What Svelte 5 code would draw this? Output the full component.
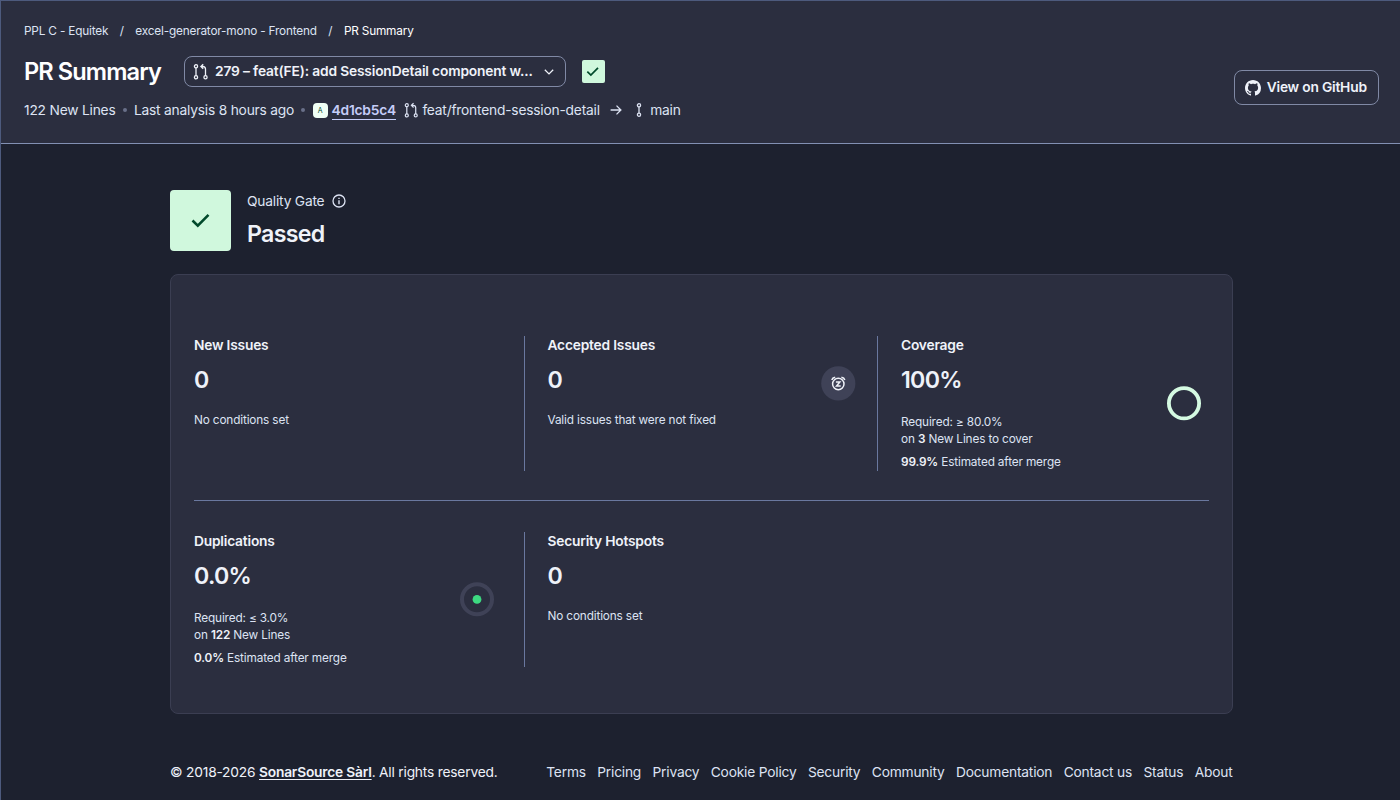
<script>
  const links = ['Terms', 'Pricing', 'Privacy', 'Cookie Policy', 'Security', 'Community', 'Documentation', 'Contact us', 'Status', 'About'];

  const rows = [
    [
      { title: 'New Issues', value: '0', note: 'No conditions set' },
      { title: 'Accepted Issues', value: '0', note: 'Valid issues that were not fixed', icon: 'snooze' },
      { title: 'Coverage', value: '100%', required: '≥ 80.0%', lines: '3', linesLabel: 'New Lines to cover', estimated: '99.9%', icon: 'coverage' }
    ],
    [
      { title: 'Duplications', value: '0.0%', required: '≤ 3.0%', lines: '122', linesLabel: 'New Lines', estimated: '0.0%', icon: 'duplication' },
      { title: 'Security Hotspots', value: '0', note: 'No conditions set' }
    ]
  ];
</script>

{#snippet pull(size)}
  <svg viewBox="0 0 16 16" width={size} height={size} fill="none" stroke="currentColor" stroke-width="1.3">
    <circle cx="3" cy="2.3" r="1.6" />
    <circle cx="3" cy="13.3" r="1.6" />
    <circle cx="12.5" cy="13.3" r="1.6" />
    <path d="M3 3.9V11.7M12.5 11.7V5.1q0-2.6-2.6-2.6H8M10.2 .2 7.9 2.5l2.3 2.3" />
  </svg>
{/snippet}

{#snippet check(size)}
  <svg viewBox="0 0 24 24" width={size} height={size} fill="none" stroke="#014a2b" stroke-width="2.6">
    <path d="M3.5 11.5 8.8 16.6 19.5 5.9" />
  </svg>
{/snippet}

<div class="page">
  <header>
    <div class="head-main">
      <nav class="crumbs">
        <span>PPL C - Equitek</span><i>/</i><span>excel-generator-mono - Frontend</span><i>/</i><span class="current">PR Summary</span>
      </nav>
      <div class="title-row">
        <h1>PR Summary</h1>
        <button class="picker">
          {@render pull(16)}
          <span>279 – feat(FE): add SessionDetail component w...</span>
          <svg viewBox="0 0 10 6" width="10" height="6" fill="none" stroke="currentColor" stroke-width="1.3"><path d="M.8.7 5 4.9 9.2.7" /></svg>
        </button>
        <span class="badge">{@render check(16)}</span>
      </div>
      <div class="meta">
        <span>122 New Lines</span>
        <i class="dot"></i>
        <span>Last analysis 8 hours ago</span>
        <i class="dot"></i>
        <span class="avatar">A</span>
        <a class="commit" href="#commit">4d1cb5c4</a>
        {@render pull(15)}
        <span class="branch">feat/frontend-session-detail</span>
        <svg class="arrow" viewBox="0 0 12 12" width="12" height="12" fill="none" stroke="currentColor" stroke-width="1.3"><path d="M.6 6h10.2M6.5 1.6 10.9 6l-4.4 4.4" /></svg>
        <svg class="target" viewBox="0 0 6 14" width="6" height="14" fill="none" stroke="currentColor" stroke-width="1.3"><circle cx="3" cy="2.3" r="1.6" /><circle cx="3" cy="11.7" r="1.6" /><path d="M3 3.9v6.2" /></svg>
        <span>main</span>
      </div>
    </div>
    <button class="github">
      <svg viewBox="0 0 16 16" width="16" height="16" fill="currentColor"><path d="M8 0C3.58 0 0 3.58 0 8c0 3.54 2.29 6.53 5.47 7.59.4.07.55-.17.55-.38 0-.19-.01-.82-.01-1.49-2.01.37-2.53-.49-2.69-.94-.09-.23-.48-.94-.82-1.13-.28-.15-.68-.52-.01-.53.63-.01 1.08.58 1.23.82.72 1.21 1.87.87 2.33.66.07-.52.28-.87.51-1.07-1.78-.2-3.64-.89-3.64-3.95 0-.87.31-1.59.82-2.15-.08-.2-.36-1.02.08-2.12 0 0 .67-.21 2.2.82.64-.18 1.32-.27 2-.27s1.36.09 2 .27c1.53-1.04 2.2-.82 2.2-.82.44 1.1.16 1.92.08 2.12.51.56.82 1.27.82 2.15 0 3.07-1.87 3.75-3.65 3.95.29.25.54.73.54 1.48 0 1.07-.01 1.93-.01 2.2 0 .21.15.46.55.38A8.01 8.01 0 0 0 16 8c0-4.42-3.58-8-8-8z" /></svg>
      <span>View on GitHub</span>
    </button>
  </header>

  <main>
    <section class="gate">
      <div class="gate-icon">{@render check(24)}</div>
      <div>
        <div class="gate-label">
          <span>Quality Gate</span>
          <svg viewBox="0 0 14 14" width="14" height="14" fill="none" stroke="currentColor" stroke-width="1.3"><circle cx="7" cy="7" r="6" /><path d="M7 6.2v4M7 3.7v1.4" stroke-width="1.4" /></svg>
        </div>
        <div class="gate-status">Passed</div>
      </div>
    </section>

    <section class="card">
      {#each rows as row}
        <div class="row">
          {#each row as m}
            <article class="measure">
              <div>
                <h2>{m.title}</h2>
                <div class="value">{m.value}</div>
                {#if m.note}
                  <p class="note">{m.note}</p>
                {:else}
                  <p class="required">Required: {m.required}</p>
                  <p class="on">on <b>{m.lines}</b> {m.linesLabel}</p>
                  <p class="estimated"><b>{m.estimated}</b> Estimated after merge</p>
                {/if}
              </div>
              {#if m.icon === 'snooze'}
                <svg class="snooze" viewBox="0 0 35 35" width="35" height="35" fill="none">
                  <circle cx="17.3" cy="17.4" r="17.1" fill="#3f4257" />
                  <g stroke="#eff2f9" stroke-width="1.5">
                    <circle cx="17.3" cy="18" r="5.7" />
                    <path d="M10.8 14Q11.4 11.8 14.2 11.3M23.8 14Q23.2 11.8 20.4 11.3" />
                    <path d="M14.9 16.1h3.9l-3.2 3.8h4.1" />
                  </g>
                </svg>
              {:else if m.icon === 'coverage'}
                <svg class="ring coverage" viewBox="0 0 34 34" width="34" height="34" fill="none"><circle cx="17" cy="17.3" r="15.1" stroke="#d5fae2" stroke-width="3.8" /></svg>
              {:else if m.icon === 'duplication'}
                <svg class="ring" viewBox="0 0 34 34" width="34" height="34" fill="none"><circle cx="17" cy="17.3" r="15" stroke="#3f4257" stroke-width="4" /><circle cx="17" cy="17.4" r="4.4" fill="#3dd981" /></svg>
              {/if}
            </article>
          {/each}
        </div>
      {/each}
    </section>

    <footer>
      <span class="copy">© 2018-2026 <a href="#sonar">SonarSource Sàrl</a>. All rights reserved.</span>
      <nav>
        {#each links as link}<span>{link}</span>{/each}
      </nav>
    </footer>
  </main>
</div>

<style>
  :global(body) { background: #1d212f; }
  .page {
    box-sizing: border-box;
    width: 1400px;
    height: 800px;
    overflow: hidden;
    border-top: 1px solid #4d5a7d;
    border-left: 1px solid #4d5a7d;
    background: #1d212f;
    color: #dde3f3;
    font: 13.77px/20px Inter, sans-serif;
    letter-spacing: -0.2px;
  }
  h1, h2, p { margin: 0; }
  i { font-style: normal; }
  svg { flex: none; display: block; overflow: visible; }
  button { font: inherit; letter-spacing: inherit; background: none; box-sizing: border-box; color: #eff2f9; font-weight: 600; border: 1px solid #8089a5; border-radius: 8px; }

  header {
    box-sizing: border-box;
    height: 143px;
    display: flex;
    justify-content: space-between;
    align-items: flex-start;
    padding: 20px 21px 0 23px;
    background: #2b2e3f;
    border-bottom: 1px solid #8290b3;
  }
  .crumbs { display: flex; font-size: 11.8px; letter-spacing: -0.18px; }
  .crumbs i { width: 27px; text-align: center; }
  .crumbs .current { color: #fff; }
  .title-row { display: flex; align-items: center; margin-top: 15px; height: 31px; }
  h1 { font-size: 23.6px; font-weight: 600; color: #fff; line-height: 31px; width: 160px; letter-spacing: -0.9px; }
  .picker { width: 382px; height: 31px; display: flex; align-items: center; padding: 0 11px 0 8px; }
  .picker span { margin-left: 6px; flex: 1; text-align: left; white-space: nowrap; padding-bottom: 2px; letter-spacing: -0.16px; }
  .badge { width: 23px; height: 23px; margin-left: 15.5px; display: grid; place-items: center; background: #d0f8dd; border-radius: 2px; }
  .meta { display: flex; align-items: center; height: 20px; margin-top: 13px; white-space: nowrap; }
  .dot { width: 4px; height: 4px; border-radius: 50%; background: #69708a; margin: 0 7.2px; }
  .avatar { width: 15px; height: 15px; border-radius: 4px; background: #f0fff5; color: #014a2b; font-size: 7px; line-height: 15px; text-align: center; letter-spacing: 0; }
  .commit { color: #c5cdf8; font-weight: 600; text-decoration: none; border-bottom: 1px solid #c5cdf8; height: 18px; line-height: 18px; margin: 0 8.4px 0 4px; }
  .branch { margin-left: 3px; }
  .arrow { margin-left: 10.4px; }
  .target { margin: 0 8px 0 14px; }
  .github { width: 145.5px; height: 35px; margin-top: 49px; display: flex; align-items: center; justify-content: center; gap: 6px; padding: 0 1px 0 0; white-space: nowrap; }
  .github span { padding-bottom: 2px; }

  main { width: 1062.5px; margin-left: 169px; }
  .gate { display: flex; gap: 16px; padding-top: 46px; height: 61px; }
  .gate-icon { width: 61px; height: 61px; background: #d0f8dd; border-radius: 4px; display: grid; place-items: center; }
  .gate-label { display: flex; align-items: center; gap: 8px; margin-top: 1px; }
  .gate-status { font-size: 23.2px; font-weight: 600; line-height: 32px; margin-top: 7px; color: #eff2f9; letter-spacing: -0.68px; }

  .card { box-sizing: border-box; height: 439.5px; margin-top: 23px; padding: 61px 23px 0; border: 1px solid #3b3e52; border-radius: 8px; background: #2b2e3f; }
  .row { display: grid; grid-template-columns: repeat(3, 330.5px); column-gap: 23px; height: 135px; }
  .row + .row { margin-top: 29px; padding-top: 31px; border-top: 1px solid #6a789f; }
  .measure { box-sizing: border-box; display: flex; justify-content: space-between; align-items: center; padding-right: 29.5px; }
  .measure > div { align-self: flex-start; }
  .measure:not(:nth-child(3)):not(:last-child) { border-right: 1px solid #6a789f; }
  h2 { font-size: 13.77px; line-height: 18px; font-weight: 600; color: #eff2f9; }
  .value { font-size: 23.2px; line-height: 32px; margin-top: 10px; font-weight: 600; color: #eff2f9; letter-spacing: -0.7px; }
  .measure p { font-size: 11.8px; line-height: 16.5px; letter-spacing: -0.15px; }
  .measure .note { margin-top: 16px; }
  .measure .required { margin-top: 18px; }
  .measure .estimated { margin-top: 7px; }
  b { font-weight: 600; color: #eff2f9; }
  .snooze { align-self: flex-start; margin-top: 30px; margin-right: -8px; }
  .ring { margin-bottom: 0.5px; margin-right: 0.5px; }
  .coverage { margin-right: 1.5px; }

  footer { display: flex; justify-content: space-between; margin-top: 48.5px; white-space: nowrap; }
  footer a { color: inherit; font-weight: 600; text-decoration: underline; text-underline-offset: 2px; }
  .copy { color: #eff2f9; }
  footer nav { display: flex; gap: 11.4px; }
</style>
